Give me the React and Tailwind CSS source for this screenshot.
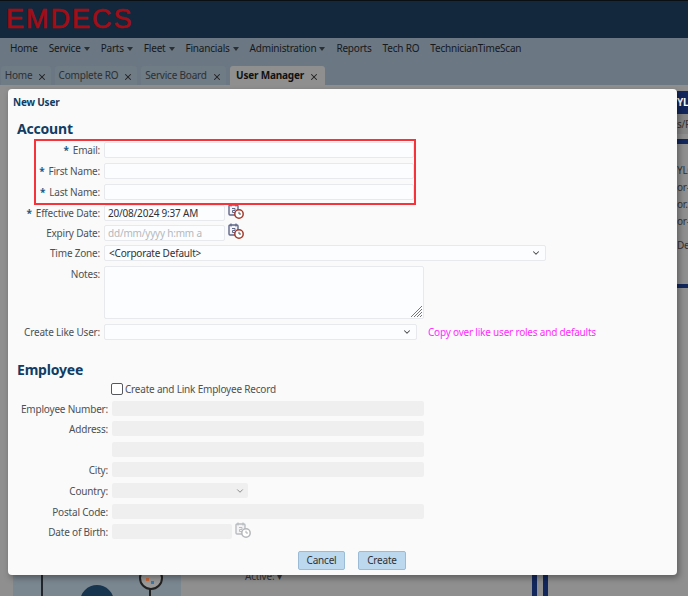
import { ChevronDown, X } from "lucide-react";

const font = "font-['Noto_Sans',sans-serif]";
const labelText = "text-right text-[10px] leading-none whitespace-nowrap text-[#4c5156] shrink-0";

function CalendarClock({ disabled }) {
  const a = disabled ? "#b9bcc0" : "#5f6788";
  const b = disabled ? "#b5b7ba" : "#a33a2c";
  return (
    <svg width="16" height="16" viewBox="0 0 16 16" className="shrink-0 -mt-[4px] -ml-[1px]">
      <rect x="1" y="2" width="9" height="10" rx="1" fill="#f4f4f6" stroke={a} strokeWidth="1.4" />
      <path d="M3 0.5v3M8 0.5v3" stroke={a} strokeWidth="1.2" />
      <path d="M4 5.5h3v2H4.500v2H7" fill="none" stroke={a} strokeWidth="1" />
      <circle cx="11" cy="11" r="4.200" fill="#fff" stroke={b} strokeWidth="1.500" />
      <path d="M11 8.800V11h2" fill="none" stroke={disabled ? "#a5a7aa" : "#444"} strokeWidth="0.9" />
    </svg>
  );
}

function Tab({ label, active, width }) {
  return (
    <div
      className={`flex items-center justify-center gap-[5px] h-[19px] rounded-t-[3px] ${width} ${
        active ? "bg-[#8f8f8f] text-[#111] font-bold" : "bg-[#6f7b85] text-[#2c3034]"
      } text-[10px]`}
    >
      <span>{label}</span>
      <X size={10} strokeWidth={2.5} className="mt-[3px] text-[#222]" />
    </div>
  );
}

function NavItem({ label, menu }) {
  return (
    <div className="flex items-center gap-[3px] text-[10px] text-[#15191d]">
      <span>{label}</span>
      {menu && <span className="w-0 h-0 border-x-[3.5px] border-x-transparent border-t-[4px] border-t-[#2a2f33]" />}
    </div>
  );
}

function Row({ label, required, width = "w-[87px]", className = "", children }) {
  return (
    <div className={`flex items-center gap-[4px] ${className}`}>
      <div className={`${labelText} ${width}`}>
        {required && <span className="text-[#1b5a8a] font-bold mr-[4px]">*</span>}
        {label}
      </div>
      {children}
    </div>
  );
}

function Input({ width, value, muted, className = "" }) {
  return (
    <div
      className={`flex items-center h-[16px] px-[3px] rounded-[2px] border border-[#e8e9ec] bg-[#fbfdff] text-[10px] whitespace-nowrap ${
        muted ? "text-[#b5b8bc]" : "text-[#2e3236]"
      } ${width} ${className}`}
    >
      {value}
    </div>
  );
}

function Select({ width, value }) {
  return (
    <div className={`flex items-center justify-between h-[16px] px-[4px] rounded-[2px] border border-[#e8e9ec] bg-[#fbfdff] text-[10px] text-[#2e3236] ${width}`}>
      <span>{value}</span>
      <ChevronDown size={10} strokeWidth={2.5} className="text-[#444]" />
    </div>
  );
}

function Disabled({ width, children }) {
  return (
    <div className={`flex items-center justify-end pr-[3px] h-[15px] rounded-[2px] bg-[#efeff0] ${width}`}>
      {children}
    </div>
  );
}

export default function App() {
  return (
    <div className={`relative w-[688px] h-[596px] overflow-hidden bg-[#8f8f8f] tracking-[-0.2px] ${font}`}>
      {/* HEADER */}
      <div className="h-[38px] bg-[#13283c] border-t border-[#0a0f14] pl-[6px] pt-[3px]">
        <span className="font-['Liberation_Sans',sans-serif] text-[27px] leading-[30px] tracking-[2px] text-[#a30d16] [-webkit-text-stroke:0.6px_#a30d16]">
          EMDECS
        </span>
      </div>

      {/* NAV */}
      <div className="h-[47px] bg-[#6b7783] flex flex-col justify-between">
        <div className="flex items-center gap-[11px] pl-[10px] pt-[3px]">
          <NavItem label="Home" />
          <NavItem label="Service" menu />
          <NavItem label="Parts" menu />
          <NavItem label="Fleet" menu />
          <NavItem label="Financials" menu />
          <NavItem label="Administration" menu />
          <NavItem label="Reports" />
          <NavItem label="Tech RO" />
          <NavItem label="TechnicianTimeScan" />
        </div>
        <div className="flex gap-[4px] pl-[1px]">
          <Tab label="Home" width="w-[50px]" />
          <Tab label="Complete RO" width="w-[82px]" />
          <Tab label="Service Board" width="w-[85px]" />
          <Tab label="User Manager" active width="w-[95px]" />
        </div>
      </div>

      {/* PAGE BEHIND THE DIALOG */}
      <div className="flex justify-end">
        <div className="w-[11px] pt-[6px] text-[10px] leading-none text-[#333] overflow-hidden">
          <div className="h-[23px] bg-[#12275c] text-white font-bold pt-[6px] whitespace-nowrap">YLO</div>
          <div className="h-[20px] pt-[5px] bg-[#858585] whitespace-nowrap">s/R</div>
          <div className="h-[5px] mt-[5px] bg-[#12275c]" />
          <div className="pt-[21px] whitespace-nowrap">YLO</div>
          <div className="pt-[7px] whitespace-nowrap">or-</div>
          <div className="pt-[7px] whitespace-nowrap">or.v</div>
          <div className="pt-[7px] whitespace-nowrap">or-</div>
          <div className="pt-[14px] whitespace-nowrap">De</div>
          <div className="h-[4px] mt-[34px] bg-[#12275c]" />
        </div>
      </div>

      {/* BOTTOM PEEK */}
      <div className="absolute left-[13px] top-[575px] w-[168px] h-[21px] bg-[#7b8790]">
        <div className="absolute left-[28px] top-0 w-[2px] h-[21px] bg-[#20262b]" />
        <div className="absolute left-[67px] top-[10px] w-[34px] h-[34px] rounded-full bg-[#17354f]" />
        <div className="absolute left-[136px] top-[14px] w-[2px] h-[7px] bg-[#222]" />
        <div className="absolute left-[126px] top-[-9px] w-[24px] h-[24px] rounded-full border-2 border-[#222] bg-[#9a9a9a]" />
        <div className="absolute left-[133px] top-[3px] w-[3px] h-[3px] bg-[#c96a3c]" />
        <div className="absolute left-[138px] top-[6px] w-[3px] h-[3px] bg-[#3c78a8]" />
      </div>
      <div className="absolute left-[245px] top-[569px] text-[10px] text-[#333]">Active: ▾</div>
      <div className="absolute left-[532px] top-[575px] w-[5px] h-[21px] bg-[#12275c]" />
      <div className="absolute left-[543px] top-[575px] w-[5px] h-[21px] bg-[#12275c]" />

      {/* DIALOG */}
      <div className="absolute left-[8px] top-[89px] w-[669px] h-[486px] bg-[#fafafa] rounded-[4px] shadow-[2px_3px_6px_rgba(0,0,0,0.35)] pl-[5px]">
        <div className="pt-[8px] text-[10px] leading-[10px] font-bold text-[#0f3d63]">New User</div>

        <div className="pl-[4px] mt-[14px] text-[14px] leading-[16px] font-bold text-[#0f3d63]">Account</div>

        <div className="mt-[5px] flex flex-col">
          <Row label="Email:" required>
            <Input width="w-[310px]" />
          </Row>
          <Row label="First Name:" required className="mt-[5px]">
            <Input width="w-[310px]" />
          </Row>
          <Row label="Last Name:" required className="mt-[5px]">
            <Input width="w-[310px]" />
          </Row>
          <Row label="Effective Date:" required className="mt-[5px]">
            <Input width="w-[121px]" value="20/08/2024 9:37 AM" />
            <CalendarClock />
          </Row>
          <Row label="Expiry Date:" className="mt-[4px]">
            <Input width="w-[121px]" value="dd/mm/yyyy h:mm a" muted />
            <CalendarClock />
          </Row>
          <Row label="Time Zone:" className="mt-[4px]">
            <Select width="w-[442px]" value="<Corporate Default>" />
          </Row>
          <div className="flex gap-[4px] mt-[5px]">
            <div className={`${labelText} w-[87px] pt-[3px]`}>Notes:</div>
            <div className="relative w-[320px] h-[53px] rounded-[2px] border border-[#e8e9ec] bg-[#fbfdff]">
              <svg width="13" height="13" viewBox="0 0 13 13" className="absolute right-0 bottom-0">
                <path d="M12 1L1 12M12 4L4 12M12 7L7 12M12 10L10 12" stroke="#777" strokeWidth="1" />
              </svg>
            </div>
          </div>
          <Row label="Create Like User:" className="mt-[5px]">
            <Select width="w-[313px]" />
            <span className="ml-[7px] text-[10px] text-[#ff2bff]">Copy over like user roles and defaults</span>
          </Row>
        </div>

        <div className="pl-[4px] mt-[22px] text-[14px] leading-[16px] font-bold text-[#0f3d63]">Employee</div>

        <div className="mt-[5px] flex flex-col">
          <div className="flex items-center gap-[2px] h-[12px] pl-[98px]">
            <div className="w-[12px] h-[12px] rounded-[2px] border border-[#55595e] bg-white" />
            <span className="text-[10px] leading-none text-[#4c5156]">Create and Link Employee Record</span>
          </div>
          <Row label="Employee Number:" width="w-[95px]" className="mt-[6px]">
            <Disabled width="w-[312px]" />
          </Row>
          <Row label="Address:" width="w-[95px]" className="mt-[5px]">
            <Disabled width="w-[312px]" />
          </Row>
          <Row label="" width="w-[95px]" className="mt-[6px]">
            <Disabled width="w-[312px]" />
          </Row>
          <Row label="City:" width="w-[95px]" className="mt-[5px]">
            <Disabled width="w-[312px]" />
          </Row>
          <Row label="Country:" width="w-[95px]" className="mt-[6px]">
            <Disabled width="w-[136px]">
              <ChevronDown size={10} strokeWidth={2} className="text-[#777]" />
            </Disabled>
          </Row>
          <Row label="Postal Code:" width="w-[95px]" className="mt-[6px]">
            <Disabled width="w-[312px]" />
          </Row>
          <Row label="Date of Birth:" width="w-[95px]" className="mt-[5px]">
            <Disabled width="w-[120px]" />
            <CalendarClock disabled />
          </Row>
        </div>

        <div className="flex gap-[13px] mt-[12px] ml-[285px]">
          <button className="w-[47px] h-[19px] rounded-[2px] border border-[#9cbcd6] bg-[#bcd8ee] text-[10px] text-[#2e3236]">Cancel</button>
          <button className="w-[48px] h-[19px] rounded-[2px] border border-[#9cbcd6] bg-[#bcd8ee] text-[10px] text-[#2e3236]">Create</button>
        </div>

        {/* red annotation round the name fields */}
        <div className="absolute left-[26px] top-[50px] w-[382px] h-[66px] border-[2px] border-[#f5333b]" />
      </div>
    </div>
  );
}
